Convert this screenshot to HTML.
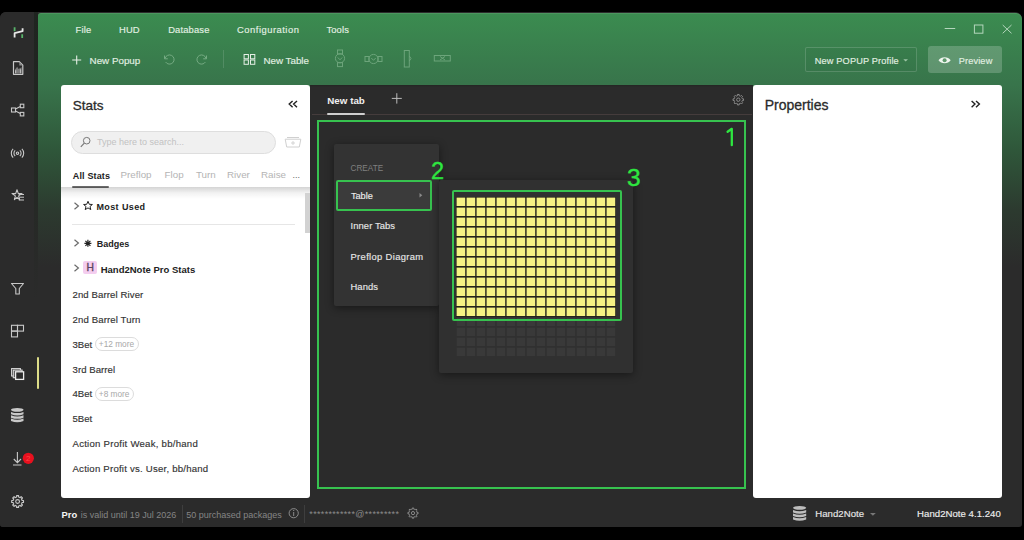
<!DOCTYPE html>
<html><head><meta charset="utf-8"><style>
html,body{margin:0;padding:0;background:#000;width:1024px;height:540px;overflow:hidden}
.t{position:absolute;font-family:"Liberation Sans", sans-serif;line-height:1;white-space:nowrap}
.r{position:absolute;display:block}
svg.r{overflow:visible}
</style></head><body>
<div class="r" style="left:0px;top:12px;width:1022px;height:515px;background:#2b2b2b;border-radius:6px 7px 3px 3px"></div>
<div class="r" style="left:38px;top:13px;width:984px;height:287px;background:linear-gradient(to bottom,#3b8c50 0px,#38744b 72px,#2f573a 137px,#2c3a2f 197px,#2b2b2b 254px);border-top-right-radius:6px;border-top-left-radius:3px;box-shadow:inset 0 1px 0 rgba(255,255,255,.09)"></div>
<div class="r" style="left:0px;top:12px;width:37px;height:515px;background:#2b2b2b;border-top-left-radius:6px;border-bottom-left-radius:3px"></div>
<div class="r" style="left:34px;top:12px;width:4px;height:288px;background:linear-gradient(to bottom,#1f2420 0px,#232823 150px,rgba(43,43,43,0) 288px)"></div>
<div class="t" style="left:75.60px;top:24.74px;font-size:9.4px;color:#e2f0e2;font-weight:400;letter-spacing:0.15px;-webkit-text-stroke:0.15px #e2f0e2">File</div>
<div class="t" style="left:119.00px;top:24.74px;font-size:9.4px;color:#e2f0e2;font-weight:400;letter-spacing:0.15px;-webkit-text-stroke:0.15px #e2f0e2">HUD</div>
<div class="t" style="left:168.20px;top:24.74px;font-size:9.4px;color:#e2f0e2;font-weight:400;letter-spacing:0.15px;-webkit-text-stroke:0.15px #e2f0e2">Database</div>
<div class="t" style="left:237.10px;top:24.74px;font-size:9.4px;color:#e2f0e2;font-weight:400;letter-spacing:0.15px;-webkit-text-stroke:0.15px #e2f0e2;letter-spacing:0.5px">Configuration</div>
<div class="t" style="left:326.40px;top:24.74px;font-size:9.4px;color:#e2f0e2;font-weight:400;letter-spacing:0.15px;-webkit-text-stroke:0.15px #e2f0e2">Tools</div>
<svg class="r" style="left:70px;top:52px;" width="14" height="16" viewBox="70 52 14 16"><path d="M76.7 55.5V64.5M72.2 60H81.2" stroke="#e6efe6" stroke-width="1.1" fill="none"/></svg>
<div class="t" style="left:89.60px;top:55.80px;font-size:9.8px;color:#e2f0e2;font-weight:400;-webkit-text-stroke:0.15px #e2f0e2">New Popup</div>
<svg class="r" style="left:160px;top:50px;opacity:.7" width="20" height="18" viewBox="160 50 20 18"><path d="M164.5 55.5V58.8H167.8" stroke="#8fbf9a" stroke-width="1" fill="none"/><path d="M165 58.5A4.6 4.6 0 1 1 165.6 62" stroke="#8fbf9a" stroke-width="1" fill="none"/></svg>
<svg class="r" style="left:194px;top:50px;opacity:.7" width="18" height="18" viewBox="194 50 18 18"><path d="M206.5 55.5V58.8H203.2" stroke="#8fbf9a" stroke-width="1" fill="none"/><path d="M206 58.5A4.6 4.6 0 1 0 205.4 62" stroke="#8fbf9a" stroke-width="1" fill="none"/></svg>
<div class="r" style="left:223px;top:50px;width:1px;height:18px;background:rgba(255,255,255,.13)"></div>
<svg class="r" style="left:240px;top:50px;" width="20" height="18" viewBox="240 50 20 18"><g stroke="#e6efe6" stroke-width="1" fill="none"><rect x="244.1" y="54.5" width="4.3" height="4.3"/><rect x="250.5" y="54.5" width="4.3" height="4.3"/><rect x="244.1" y="60" width="4.3" height="4.3"/><rect x="250.5" y="60" width="4.3" height="4.3"/></g></svg>
<div class="t" style="left:263.40px;top:55.80px;font-size:9.8px;color:#e2f0e2;font-weight:400;-webkit-text-stroke:0.15px #e2f0e2">New Table</div>
<svg class="r" style="left:330px;top:46px;" width="130" height="24" viewBox="330 46 130 24"><g stroke="#8fbf9a" stroke-width="1" fill="none" opacity=".6">
<rect x="337.5" y="50" width="5" height="4"/><circle cx="340" cy="58.3" r="4.6"/><rect x="337.5" y="62.6" width="5" height="4"/><path d="M337.8 57.5L340 59.8L342.2 57.5"/>
<rect x="365" y="56.5" width="4" height="5"/><circle cx="373.5" cy="59" r="4.6"/><rect x="378" y="56.5" width="4" height="5"/><path d="M371.3 58L373.5 60.3L375.7 58"/>
<rect x="404.3" y="50.5" width="5" height="16.5"/><path d="M409.3 56L411 58.5L409.3 61"/>
<rect x="434.3" y="55.5" width="16" height="5.5"/><path d="M440 56.5L445 60M445 56.5L440 60"/>
</g></svg>
<svg class="r" style="left:940px;top:20px;" width="80" height="18" viewBox="940 20 80 18"><g stroke="#b4d6bc" stroke-width="1" fill="none"><path d="M944.7 28.5H955.2"/><rect x="974.4" y="25" width="8.5" height="8.2"/><path d="M1002.7 25L1011.5 33.3M1011.5 25L1002.7 33.3"/></g></svg>
<div class="r" style="left:805px;top:47px;width:112px;height:25px;border:1px solid rgba(255,255,255,.16);box-sizing:border-box;background:rgba(0,0,0,.02);border-radius:2px"></div>
<div class="t" style="left:814.80px;top:56.81px;font-size:9.2px;color:#e2f0e2;font-weight:400;letter-spacing:0.15px;-webkit-text-stroke:0.15px #e2f0e2">New POPUP Profile</div>
<svg class="r" style="left:900px;top:56px;" width="12" height="8" viewBox="900 56 12 8"><path d="M903.3 59.3H908L905.65 61.6Z" fill="#9dc5a5"/></svg>
<div class="r" style="left:928px;top:46px;width:74px;height:27px;background:rgba(255,255,255,.2);border-radius:3px"></div>
<svg class="r" style="left:936px;top:54px;" width="17" height="12" viewBox="936 54 17 12"><path d="M938.5 60.2C941 56.2 948.2 56.2 950.7 60.2C948.2 64.2 941 64.2 938.5 60.2Z" fill="#eef5ee"/><circle cx="944.6" cy="60.2" r="2" fill="#5f9a6d"/></svg>
<div class="t" style="left:958.70px;top:56.81px;font-size:9.2px;color:#e2f0e2;font-weight:400;letter-spacing:0.15px;-webkit-text-stroke:0.15px #e2f0e2">Preview</div>
<svg class="r" style="left:8px;top:24px;" width="20" height="18" viewBox="8 24 20 18"><path d="M14.6 37.6V33.2L22.6 31.2V28.2" stroke="#e8e8e8" stroke-width="1.8" fill="none" stroke-linejoin="round"/><path d="M14.6 27.2V31.3M22.2 34.3V38" stroke="#58b36a" stroke-width="1.8" fill="none"/></svg>
<svg class="r" style="left:8px;top:58px;" width="20" height="20" viewBox="8 58 20 20"><path d="M13.5 61.6H19.3L22.8 65.2V74.3H13.5Z" stroke="#c8c8c8" stroke-width="1.2" fill="none" stroke-linejoin="round"/><path d="M19.3 62V65.4H22.6Z" fill="#8a8a8a"/><path d="M15 73.5V69.5L17.2 66.8L18.6 69L21.6 67.2V73.5Z" fill="#7c7c7c"/><path d="M15.6 73.3V70.2M20.6 73.3V69.3" stroke="#bdbdbd" stroke-width="1.1"/></svg>
<svg class="r" style="left:8px;top:100px;" width="20" height="20" viewBox="8 100 20 20"><g stroke="#c8c8c8" stroke-width="1.1" fill="none"><rect x="11.5" y="108" width="4" height="4"/><rect x="20.3" y="104.2" width="3.5" height="3.5"/><rect x="20.3" y="112.4" width="3.5" height="3.5"/><path d="M15.5 109L20.3 106.5M15.5 111L20.3 113.5"/></g></svg>
<svg class="r" style="left:8px;top:144px;" width="20" height="18" viewBox="8 144 20 18"><g stroke="#c8c8c8" stroke-width="1.1" fill="none"><circle cx="17.5" cy="153.2" r="1.2"/><path d="M19.81 150.44A3.6 3.6 0 0 1 19.81 155.96M15.19 155.96A3.6 3.6 0 0 1 15.19 150.44M21.88 148.82A6.2 6.2 0 0 1 21.88 157.58M13.12 157.58A6.2 6.2 0 0 1 13.12 148.82"/></g></svg>
<svg class="r" style="left:8px;top:186px;" width="20" height="18" viewBox="8 186 20 18"><g stroke="#c8c8c8" stroke-width="1.1" fill="none" stroke-linejoin="round"><path d="M17 189.7L18.3 193.6H22L18.6 195.9L19.6 199.6L17 197.4L14.4 199.6L15.4 195.9L12 193.6H15.7Z" /></g><path d="M18.8 194.5H24M19.3 197.2H24M18.8 200H24" stroke="#c8c8c8" stroke-width="1" /></svg>
<svg class="r" style="left:8px;top:278px;" width="20" height="20" viewBox="8 278 20 20"><path d="M11.5 283.5H23.5L19.3 288.5V294H15.8V288.5Z" stroke="#c8c8c8" stroke-width="1.1" fill="none" stroke-linejoin="round"/></svg>
<svg class="r" style="left:8px;top:320px;" width="20" height="20" viewBox="8 320 20 20"><g stroke="#c8c8c8" stroke-width="1.1" fill="none"><rect x="11.5" y="325.3" width="6" height="5.8"/><rect x="17.5" y="325.3" width="6" height="5.8"/><rect x="11.5" y="331.1" width="6" height="5.8"/></g></svg>
<svg class="r" style="left:8px;top:362px;" width="20" height="22" viewBox="8 362 20 22"><rect x="11.6" y="368.6" width="8.8" height="7.4" fill="#2b2b2b" stroke="#d8d8d8" stroke-width="1.1"/><rect x="13.3" y="370.1" width="8.8" height="7.6" fill="#555" stroke="#d8d8d8" stroke-width="1.1"/><rect x="15.6" y="371.8" width="8" height="7.6" fill="#2b2b2b" stroke="#ececec" stroke-width="1.3"/></svg>
<div class="r" style="left:36.8px;top:357.3px;width:2.0px;height:31.899999999999977px;background:#dcdc88;border-radius:1px"></div>
<svg class="r" style="left:8px;top:404px;" width="19" height="20" viewBox="8 404 19 20"><g fill="#c8c8c8"><ellipse cx="17.25" cy="409.79999999999995" rx="6.25" ry="1.9"/><path d="M11 411.90Q17.25 414.30 23.5 411.90V414.30Q17.25 416.70 11 414.30Z"/><path d="M11 415.25Q17.25 417.65 23.5 415.25V417.65Q17.25 420.05 11 417.65Z"/><path d="M11 418.60Q17.25 421.00 23.5 418.60V421.00Q17.25 423.40 11 421.00Z"/></g></svg>
<svg class="r" style="left:8px;top:448px;" width="32" height="22" viewBox="8 448 32 22"><path d="M17.4 452V462.5M13.8 459L17.4 462.6L21 459M13 465H21.5" stroke="#c8c8c8" stroke-width="1.1" fill="none"/><circle cx="28.3" cy="458.3" r="5.6" fill="#e8101e"/><text x="28.3" y="461.3" font-size="8" text-anchor="middle" fill="#ff4545" font-family="Liberation Sans">2</text></svg>
<svg class="r" style="left:8px;top:492px;" width="19" height="19" viewBox="8 492 19 19"><path d="M15.92 497.22L16.66 497.00L16.61 495.58L18.59 495.58L18.54 497.00L19.28 497.22L19.44 497.29L20.12 497.65L21.09 496.62L22.48 498.01L21.45 498.98L21.81 499.66L21.88 499.82L22.10 500.56L23.52 500.51L23.52 502.49L22.10 502.44L21.88 503.18L21.81 503.34L21.45 504.02L22.48 504.99L21.09 506.38L20.12 505.35L19.44 505.71L19.28 505.78L18.54 506.00L18.59 507.42L16.61 507.42L16.66 506.00L15.92 505.78L15.76 505.71L15.08 505.35L14.11 506.38L12.72 504.99L13.75 504.02L13.39 503.34L13.32 503.18L13.10 502.44L11.68 502.49L11.68 500.51L13.10 500.56L13.32 499.82L13.39 499.66L13.75 498.98L12.72 498.01L14.11 496.62L15.08 497.65L15.76 497.29Z" stroke="#c8c8c8" stroke-width="1.1" fill="none" stroke-linejoin="round"/><circle cx="17.6" cy="501.5" r="1.9" stroke="#c8c8c8" stroke-width="1.1" fill="none"/></svg>
<div class="r" style="left:61px;top:85px;width:249px;height:413px;background:#fff;border-radius:3px"></div>
<div class="t" style="left:72.80px;top:98.77px;font-size:13.5px;color:#2a2a2a;font-weight:400;-webkit-text-stroke:0.3px #2a2a2a">Stats</div>
<svg class="r" style="left:285px;top:98px;" width="17" height="12" viewBox="285 98 17 12"><path d="M292.6 100.9L289.2 104.1L292.6 107.3M297 100.9L293.6 104.1L297 107.3" stroke="#222" stroke-width="1.4" fill="none"/></svg>
<div class="r" style="left:70.5px;top:130.5px;width:205.5px;height:23.0px;background:#f0f0f0;border:1px solid #dedede;box-sizing:border-box;border-radius:12px"></div>
<svg class="r" style="left:78px;top:134px;" width="16" height="16" viewBox="78 134 16 16"><circle cx="86.7" cy="140.7" r="3.3" stroke="#777" stroke-width="1" fill="none"/><path d="M84.3 143.2L80.8 146.8" stroke="#777" stroke-width="1.2"/></svg>
<div class="t" style="left:96.90px;top:137.88px;font-size:9px;color:#c2c2c2;font-weight:400;">Type here to search...</div>
<svg class="r" style="left:282px;top:134px;" width="22" height="16" viewBox="282 134 22 16"><path d="M285.2 139.2H300.8L299.3 147H286.7Z" stroke="#d0d0d0" stroke-width="1" fill="none"/><path d="M287 137.5H299" stroke="#d0d0d0" stroke-width="1"/><path d="M291 143H295M293 141V145" stroke="#d0d0d0" stroke-width=".9"/></svg>
<div class="t" style="left:72.80px;top:171.58px;font-size:9px;color:#222;font-weight:700;letter-spacing:0.15px">All Stats</div>
<div class="r" style="left:72px;top:186.2px;width:37px;height:1.8000000000000114px;background:#6a6a6a;border-radius:1px"></div>
<div class="t" style="left:120.50px;top:170.10px;font-size:9.8px;color:#b4b4b4;font-weight:400;">Preflop</div>
<div class="t" style="left:164.60px;top:170.10px;font-size:9.8px;color:#b4b4b4;font-weight:400;">Flop</div>
<div class="t" style="left:195.90px;top:170.10px;font-size:9.8px;color:#b4b4b4;font-weight:400;">Turn</div>
<div class="t" style="left:227.00px;top:170.10px;font-size:9.8px;color:#b4b4b4;font-weight:400;">River</div>
<div class="t" style="left:261.00px;top:170.10px;font-size:9.8px;color:#b4b4b4;font-weight:400;">Raise</div>
<div class="t" style="left:292.50px;top:171.38px;font-size:9px;color:#666;font-weight:400;">...</div>
<div class="r" style="left:61px;top:187px;width:249px;height:12px;background:linear-gradient(to bottom,rgba(0,0,0,.17),rgba(0,0,0,.05) 50%,rgba(0,0,0,0))"></div>
<div class="r" style="left:304.6px;top:193px;width:5.399999999999977px;height:39.5px;background:#d2d2d2"></div>
<svg class="r" style="left:72px;top:200px;" width="10" height="12" viewBox="72 200 10 12"><path d="M74.5 202.7L78.4 206L74.5 209.3" stroke="#6a6a6a" stroke-width="1.2" fill="none"/></svg>
<svg class="r" style="left:82px;top:199px;" width="12" height="13" viewBox="82 199 12 13"><path d="M88 201.3L89.3 204.3L92.4 204.5L90 206.5L90.8 209.6L88 207.9L85.2 209.6L86 206.5L83.6 204.5L86.7 204.3Z" stroke="#222" stroke-width="1" fill="none" stroke-linejoin="round"/></svg>
<div class="t" style="left:96.40px;top:202.98px;font-size:9px;color:#222;font-weight:700;letter-spacing:0.4px">Most Used</div>
<div class="r" style="left:72px;top:224px;width:223px;height:1px;background:#e6e6e6"></div>
<svg class="r" style="left:72px;top:237.4px;" width="10" height="12.0" viewBox="72 237.4 10 12.0"><path d="M74.5 240.1L78.4 243.4L74.5 246.70000000000002" stroke="#6a6a6a" stroke-width="1.2" fill="none"/></svg>
<svg class="r" style="left:82px;top:238px;" width="12" height="12" viewBox="82 238 12 12"><path d="M87.9 239.8V246.8M84.4 243.3H91.4M85.4 240.8L90.4 245.8M90.4 240.8L85.4 245.8" stroke="#222" stroke-width="1.2"/></svg>
<div class="t" style="left:96.70px;top:239.58px;font-size:9px;color:#222;font-weight:700;">Badges</div>
<svg class="r" style="left:72px;top:262px;" width="10" height="12" viewBox="72 262 10 12"><path d="M74.5 264.7L78.4 268L74.5 271.3" stroke="#6a6a6a" stroke-width="1.2" fill="none"/></svg>
<div class="r" style="left:83px;top:260.5px;width:14px;height:13.800000000000011px;background:#f4cdef;border-radius:2px"></div>
<div class="t" style="left:86.40px;top:262.98px;font-size:10.3px;color:#5a4662;font-weight:400;-webkit-text-stroke:0.35px #5a4662">H</div>
<div class="t" style="left:100.70px;top:264.96px;font-size:9.5px;color:#222;font-weight:700;">Hand2Note Pro Stats</div>
<div class="t" style="left:72.50px;top:290.07px;font-size:9.6px;color:#333;font-weight:400;-webkit-text-stroke:0.15px #333;letter-spacing:0.1px">2nd Barrel River</div>
<div class="t" style="left:72.50px;top:314.92px;font-size:9.6px;color:#333;font-weight:400;-webkit-text-stroke:0.15px #333;letter-spacing:0.12px">2nd Barrel Turn</div>
<div class="t" style="left:72.50px;top:339.77px;font-size:9.6px;color:#333;font-weight:400;-webkit-text-stroke:0.15px #333;letter-spacing:0.0px">3Bet</div>
<div class="t" style="left:72.50px;top:364.62px;font-size:9.6px;color:#333;font-weight:400;-webkit-text-stroke:0.15px #333;letter-spacing:0.05px">3rd Barrel</div>
<div class="t" style="left:72.50px;top:389.47px;font-size:9.6px;color:#333;font-weight:400;-webkit-text-stroke:0.15px #333;letter-spacing:0.0px">4Bet</div>
<div class="t" style="left:72.50px;top:414.32px;font-size:9.6px;color:#333;font-weight:400;-webkit-text-stroke:0.15px #333;letter-spacing:0.0px">5Bet</div>
<div class="t" style="left:72.50px;top:439.17px;font-size:9.6px;color:#333;font-weight:400;-webkit-text-stroke:0.15px #333;letter-spacing:0.25px">Action Profit Weak, bb/hand</div>
<div class="t" style="left:72.50px;top:464.02px;font-size:9.6px;color:#333;font-weight:400;-webkit-text-stroke:0.15px #333;letter-spacing:0.22px">Action Profit vs. User, bb/hand</div>
<div class="r" style="left:94.8px;top:336.5px;width:44.7px;height:14.0px;border:1px solid #dcdcdc;box-sizing:border-box;border-radius:8px"></div>
<div class="t" style="left:98.80px;top:339.77px;font-size:8.3px;color:#a8a8a8;font-weight:400;">+12 more</div>
<div class="r" style="left:94.8px;top:386.5px;width:39.7px;height:14.0px;border:1px solid #dcdcdc;box-sizing:border-box;border-radius:8px"></div>
<div class="t" style="left:98.80px;top:389.77px;font-size:8.3px;color:#a8a8a8;font-weight:400;">+8 more</div>
<div class="r" style="left:310px;top:85px;width:442.5px;height:413px;background:linear-gradient(to bottom,#232623 0px,#2b2b2b 2px)"></div>
<div class="t" style="left:327.30px;top:95.90px;font-size:9.8px;color:#f0f0f0;font-weight:700;">New tab</div>
<div class="r" style="left:312px;top:114px;width:440px;height:1px;background:#453c3c"></div>
<div class="r" style="left:327px;top:113px;width:38px;height:2px;background:#cfcfcf;border-radius:1px"></div>
<svg class="r" style="left:388px;top:90px;" width="18" height="16" viewBox="388 90 18 16"><path d="M396.8 93.2V103.6M391.8 98.4H401.8" stroke="#bbb" stroke-width="1" fill="none"/></svg>
<svg class="r" style="left:730px;top:91px;" width="17" height="18" viewBox="730 91 17 18"><path d="M736.81 95.88L737.46 95.69L737.43 94.47L739.17 94.47L739.14 95.69L739.79 95.88L739.94 95.94L740.54 96.27L741.38 95.39L742.61 96.62L741.73 97.46L742.06 98.06L742.12 98.21L742.31 98.86L743.53 98.83L743.53 100.57L742.31 100.54L742.12 101.19L742.06 101.34L741.73 101.94L742.61 102.78L741.38 104.01L740.54 103.13L739.94 103.46L739.79 103.52L739.14 103.71L739.17 104.93L737.43 104.93L737.46 103.71L736.81 103.52L736.66 103.46L736.06 103.13L735.22 104.01L733.99 102.78L734.87 101.94L734.54 101.34L734.48 101.19L734.29 100.54L733.07 100.57L733.07 98.83L734.29 98.86L734.48 98.21L734.54 98.06L734.87 97.46L733.99 96.62L735.22 95.39L736.06 96.27L736.66 95.94Z" stroke="#8a8a8a" stroke-width="1.0" fill="none" stroke-linejoin="round"/><circle cx="738.3" cy="99.7" r="1.7" stroke="#8a8a8a" stroke-width="1.0" fill="none"/></svg>
<div class="r" style="left:317px;top:120px;width:429px;height:369px;border:2px solid #37c24f;box-sizing:border-box"></div>
<svg class="r" style="left:722px;top:124px;" width="18" height="26" viewBox="722 124 18 26"><path d="M731.8 145.2V128.8L727.6 131.8" stroke="#2ee640" stroke-width="2.3" fill="none" stroke-linecap="round" stroke-linejoin="round"/></svg>
<div class="r" style="left:334px;top:144px;width:105px;height:162px;background:#333333;box-shadow:0 2px 8px rgba(0,0,0,.45);border-radius:2px"></div>
<div class="t" style="left:350.50px;top:165.36px;font-size:8.2px;color:#808080;font-weight:400;">CREATE</div>
<div class="r" style="left:336px;top:180px;width:96px;height:31px;background:#3b3b3b;border:2px solid #37c24f;box-sizing:border-box;border-radius:2px"></div>
<div class="t" style="left:350.90px;top:191.51px;font-size:9.2px;color:#ececec;font-weight:400;-webkit-text-stroke:0.15px #ececec">Table</div>
<svg class="r" style="left:416px;top:190px;" width="10" height="10" viewBox="416 190 10 10"><path d="M419.5 193L422.3 195.3L419.5 197.6Z" fill="#8a8a8a"/></svg>
<div class="t" style="left:350.50px;top:221.44px;font-size:9.4px;color:#e6e6e6;font-weight:400;-webkit-text-stroke:0.15px #e6e6e6;letter-spacing:0.1px">Inner Tabs</div>
<div class="t" style="left:350.50px;top:251.84px;font-size:9.4px;color:#e6e6e6;font-weight:400;-webkit-text-stroke:0.15px #e6e6e6;letter-spacing:0.35px">Preflop Diagram</div>
<div class="t" style="left:350.50px;top:281.54px;font-size:9.4px;color:#e6e6e6;font-weight:400;-webkit-text-stroke:0.15px #e6e6e6;letter-spacing:0.1px">Hands</div>
<div class="t" style="left:430.90px;top:160.31px;font-size:23.5px;color:#2ee640;font-weight:400;-webkit-text-stroke:0.4px #2ee640">2</div>
<div class="r" style="left:439px;top:179.5px;width:194px;height:193.5px;background:#303030;box-shadow:0 2px 8px rgba(0,0,0,.45);border-radius:2px"></div>
<div class="r" style="left:455.8px;top:196.8px;width:160.2px;height:120.19999999999999px;background:#24241c"></div>
<svg class="r" style="left:450px;top:190px;" width="174" height="170" viewBox="450 190 174 170"><rect x="456.6" y="197.6" width="8.6" height="8.4" fill="#f6f283"/><rect x="466.6" y="197.6" width="8.6" height="8.4" fill="#f6f283"/><rect x="476.6" y="197.6" width="8.6" height="8.4" fill="#f6f283"/><rect x="486.6" y="197.6" width="8.6" height="8.4" fill="#f6f283"/><rect x="496.6" y="197.6" width="8.6" height="8.4" fill="#f6f283"/><rect x="506.6" y="197.6" width="8.6" height="8.4" fill="#f6f283"/><rect x="516.6" y="197.6" width="8.6" height="8.4" fill="#f6f283"/><rect x="526.6" y="197.6" width="8.6" height="8.4" fill="#f6f283"/><rect x="536.6" y="197.6" width="8.6" height="8.4" fill="#f6f283"/><rect x="546.6" y="197.6" width="8.6" height="8.4" fill="#f6f283"/><rect x="556.6" y="197.6" width="8.6" height="8.4" fill="#f6f283"/><rect x="566.6" y="197.6" width="8.6" height="8.4" fill="#f6f283"/><rect x="576.6" y="197.6" width="8.6" height="8.4" fill="#f6f283"/><rect x="586.6" y="197.6" width="8.6" height="8.4" fill="#f6f283"/><rect x="596.6" y="197.6" width="8.6" height="8.4" fill="#f6f283"/><rect x="606.6" y="197.6" width="8.6" height="8.4" fill="#f6f283"/><rect x="456.6" y="207.6" width="8.6" height="8.4" fill="#f6f283"/><rect x="466.6" y="207.6" width="8.6" height="8.4" fill="#f6f283"/><rect x="476.6" y="207.6" width="8.6" height="8.4" fill="#f6f283"/><rect x="486.6" y="207.6" width="8.6" height="8.4" fill="#f6f283"/><rect x="496.6" y="207.6" width="8.6" height="8.4" fill="#f6f283"/><rect x="506.6" y="207.6" width="8.6" height="8.4" fill="#f6f283"/><rect x="516.6" y="207.6" width="8.6" height="8.4" fill="#f6f283"/><rect x="526.6" y="207.6" width="8.6" height="8.4" fill="#f6f283"/><rect x="536.6" y="207.6" width="8.6" height="8.4" fill="#f6f283"/><rect x="546.6" y="207.6" width="8.6" height="8.4" fill="#f6f283"/><rect x="556.6" y="207.6" width="8.6" height="8.4" fill="#f6f283"/><rect x="566.6" y="207.6" width="8.6" height="8.4" fill="#f6f283"/><rect x="576.6" y="207.6" width="8.6" height="8.4" fill="#f6f283"/><rect x="586.6" y="207.6" width="8.6" height="8.4" fill="#f6f283"/><rect x="596.6" y="207.6" width="8.6" height="8.4" fill="#f6f283"/><rect x="606.6" y="207.6" width="8.6" height="8.4" fill="#f6f283"/><rect x="456.6" y="217.6" width="8.6" height="8.4" fill="#f6f283"/><rect x="466.6" y="217.6" width="8.6" height="8.4" fill="#f6f283"/><rect x="476.6" y="217.6" width="8.6" height="8.4" fill="#f6f283"/><rect x="486.6" y="217.6" width="8.6" height="8.4" fill="#f6f283"/><rect x="496.6" y="217.6" width="8.6" height="8.4" fill="#f6f283"/><rect x="506.6" y="217.6" width="8.6" height="8.4" fill="#f6f283"/><rect x="516.6" y="217.6" width="8.6" height="8.4" fill="#f6f283"/><rect x="526.6" y="217.6" width="8.6" height="8.4" fill="#f6f283"/><rect x="536.6" y="217.6" width="8.6" height="8.4" fill="#f6f283"/><rect x="546.6" y="217.6" width="8.6" height="8.4" fill="#f6f283"/><rect x="556.6" y="217.6" width="8.6" height="8.4" fill="#f6f283"/><rect x="566.6" y="217.6" width="8.6" height="8.4" fill="#f6f283"/><rect x="576.6" y="217.6" width="8.6" height="8.4" fill="#f6f283"/><rect x="586.6" y="217.6" width="8.6" height="8.4" fill="#f6f283"/><rect x="596.6" y="217.6" width="8.6" height="8.4" fill="#f6f283"/><rect x="606.6" y="217.6" width="8.6" height="8.4" fill="#f6f283"/><rect x="456.6" y="227.6" width="8.6" height="8.4" fill="#f6f283"/><rect x="466.6" y="227.6" width="8.6" height="8.4" fill="#f6f283"/><rect x="476.6" y="227.6" width="8.6" height="8.4" fill="#f6f283"/><rect x="486.6" y="227.6" width="8.6" height="8.4" fill="#f6f283"/><rect x="496.6" y="227.6" width="8.6" height="8.4" fill="#f6f283"/><rect x="506.6" y="227.6" width="8.6" height="8.4" fill="#f6f283"/><rect x="516.6" y="227.6" width="8.6" height="8.4" fill="#f6f283"/><rect x="526.6" y="227.6" width="8.6" height="8.4" fill="#f6f283"/><rect x="536.6" y="227.6" width="8.6" height="8.4" fill="#f6f283"/><rect x="546.6" y="227.6" width="8.6" height="8.4" fill="#f6f283"/><rect x="556.6" y="227.6" width="8.6" height="8.4" fill="#f6f283"/><rect x="566.6" y="227.6" width="8.6" height="8.4" fill="#f6f283"/><rect x="576.6" y="227.6" width="8.6" height="8.4" fill="#f6f283"/><rect x="586.6" y="227.6" width="8.6" height="8.4" fill="#f6f283"/><rect x="596.6" y="227.6" width="8.6" height="8.4" fill="#f6f283"/><rect x="606.6" y="227.6" width="8.6" height="8.4" fill="#f6f283"/><rect x="456.6" y="237.6" width="8.6" height="8.4" fill="#f6f283"/><rect x="466.6" y="237.6" width="8.6" height="8.4" fill="#f6f283"/><rect x="476.6" y="237.6" width="8.6" height="8.4" fill="#f6f283"/><rect x="486.6" y="237.6" width="8.6" height="8.4" fill="#f6f283"/><rect x="496.6" y="237.6" width="8.6" height="8.4" fill="#f6f283"/><rect x="506.6" y="237.6" width="8.6" height="8.4" fill="#f6f283"/><rect x="516.6" y="237.6" width="8.6" height="8.4" fill="#f6f283"/><rect x="526.6" y="237.6" width="8.6" height="8.4" fill="#f6f283"/><rect x="536.6" y="237.6" width="8.6" height="8.4" fill="#f6f283"/><rect x="546.6" y="237.6" width="8.6" height="8.4" fill="#f6f283"/><rect x="556.6" y="237.6" width="8.6" height="8.4" fill="#f6f283"/><rect x="566.6" y="237.6" width="8.6" height="8.4" fill="#f6f283"/><rect x="576.6" y="237.6" width="8.6" height="8.4" fill="#f6f283"/><rect x="586.6" y="237.6" width="8.6" height="8.4" fill="#f6f283"/><rect x="596.6" y="237.6" width="8.6" height="8.4" fill="#f6f283"/><rect x="606.6" y="237.6" width="8.6" height="8.4" fill="#f6f283"/><rect x="456.6" y="247.6" width="8.6" height="8.4" fill="#f6f283"/><rect x="466.6" y="247.6" width="8.6" height="8.4" fill="#f6f283"/><rect x="476.6" y="247.6" width="8.6" height="8.4" fill="#f6f283"/><rect x="486.6" y="247.6" width="8.6" height="8.4" fill="#f6f283"/><rect x="496.6" y="247.6" width="8.6" height="8.4" fill="#f6f283"/><rect x="506.6" y="247.6" width="8.6" height="8.4" fill="#f6f283"/><rect x="516.6" y="247.6" width="8.6" height="8.4" fill="#f6f283"/><rect x="526.6" y="247.6" width="8.6" height="8.4" fill="#f6f283"/><rect x="536.6" y="247.6" width="8.6" height="8.4" fill="#f6f283"/><rect x="546.6" y="247.6" width="8.6" height="8.4" fill="#f6f283"/><rect x="556.6" y="247.6" width="8.6" height="8.4" fill="#f6f283"/><rect x="566.6" y="247.6" width="8.6" height="8.4" fill="#f6f283"/><rect x="576.6" y="247.6" width="8.6" height="8.4" fill="#f6f283"/><rect x="586.6" y="247.6" width="8.6" height="8.4" fill="#f6f283"/><rect x="596.6" y="247.6" width="8.6" height="8.4" fill="#f6f283"/><rect x="606.6" y="247.6" width="8.6" height="8.4" fill="#f6f283"/><rect x="456.6" y="257.6" width="8.6" height="8.4" fill="#f6f283"/><rect x="466.6" y="257.6" width="8.6" height="8.4" fill="#f6f283"/><rect x="476.6" y="257.6" width="8.6" height="8.4" fill="#f6f283"/><rect x="486.6" y="257.6" width="8.6" height="8.4" fill="#f6f283"/><rect x="496.6" y="257.6" width="8.6" height="8.4" fill="#f6f283"/><rect x="506.6" y="257.6" width="8.6" height="8.4" fill="#f6f283"/><rect x="516.6" y="257.6" width="8.6" height="8.4" fill="#f6f283"/><rect x="526.6" y="257.6" width="8.6" height="8.4" fill="#f6f283"/><rect x="536.6" y="257.6" width="8.6" height="8.4" fill="#f6f283"/><rect x="546.6" y="257.6" width="8.6" height="8.4" fill="#f6f283"/><rect x="556.6" y="257.6" width="8.6" height="8.4" fill="#f6f283"/><rect x="566.6" y="257.6" width="8.6" height="8.4" fill="#f6f283"/><rect x="576.6" y="257.6" width="8.6" height="8.4" fill="#f6f283"/><rect x="586.6" y="257.6" width="8.6" height="8.4" fill="#f6f283"/><rect x="596.6" y="257.6" width="8.6" height="8.4" fill="#f6f283"/><rect x="606.6" y="257.6" width="8.6" height="8.4" fill="#f6f283"/><rect x="456.6" y="267.6" width="8.6" height="8.4" fill="#f6f283"/><rect x="466.6" y="267.6" width="8.6" height="8.4" fill="#f6f283"/><rect x="476.6" y="267.6" width="8.6" height="8.4" fill="#f6f283"/><rect x="486.6" y="267.6" width="8.6" height="8.4" fill="#f6f283"/><rect x="496.6" y="267.6" width="8.6" height="8.4" fill="#f6f283"/><rect x="506.6" y="267.6" width="8.6" height="8.4" fill="#f6f283"/><rect x="516.6" y="267.6" width="8.6" height="8.4" fill="#f6f283"/><rect x="526.6" y="267.6" width="8.6" height="8.4" fill="#f6f283"/><rect x="536.6" y="267.6" width="8.6" height="8.4" fill="#f6f283"/><rect x="546.6" y="267.6" width="8.6" height="8.4" fill="#f6f283"/><rect x="556.6" y="267.6" width="8.6" height="8.4" fill="#f6f283"/><rect x="566.6" y="267.6" width="8.6" height="8.4" fill="#f6f283"/><rect x="576.6" y="267.6" width="8.6" height="8.4" fill="#f6f283"/><rect x="586.6" y="267.6" width="8.6" height="8.4" fill="#f6f283"/><rect x="596.6" y="267.6" width="8.6" height="8.4" fill="#f6f283"/><rect x="606.6" y="267.6" width="8.6" height="8.4" fill="#f6f283"/><rect x="456.6" y="277.6" width="8.6" height="8.4" fill="#f6f283"/><rect x="466.6" y="277.6" width="8.6" height="8.4" fill="#f6f283"/><rect x="476.6" y="277.6" width="8.6" height="8.4" fill="#f6f283"/><rect x="486.6" y="277.6" width="8.6" height="8.4" fill="#f6f283"/><rect x="496.6" y="277.6" width="8.6" height="8.4" fill="#f6f283"/><rect x="506.6" y="277.6" width="8.6" height="8.4" fill="#f6f283"/><rect x="516.6" y="277.6" width="8.6" height="8.4" fill="#f6f283"/><rect x="526.6" y="277.6" width="8.6" height="8.4" fill="#f6f283"/><rect x="536.6" y="277.6" width="8.6" height="8.4" fill="#f6f283"/><rect x="546.6" y="277.6" width="8.6" height="8.4" fill="#f6f283"/><rect x="556.6" y="277.6" width="8.6" height="8.4" fill="#f6f283"/><rect x="566.6" y="277.6" width="8.6" height="8.4" fill="#f6f283"/><rect x="576.6" y="277.6" width="8.6" height="8.4" fill="#f6f283"/><rect x="586.6" y="277.6" width="8.6" height="8.4" fill="#f6f283"/><rect x="596.6" y="277.6" width="8.6" height="8.4" fill="#f6f283"/><rect x="606.6" y="277.6" width="8.6" height="8.4" fill="#f6f283"/><rect x="456.6" y="287.6" width="8.6" height="8.4" fill="#f6f283"/><rect x="466.6" y="287.6" width="8.6" height="8.4" fill="#f6f283"/><rect x="476.6" y="287.6" width="8.6" height="8.4" fill="#f6f283"/><rect x="486.6" y="287.6" width="8.6" height="8.4" fill="#f6f283"/><rect x="496.6" y="287.6" width="8.6" height="8.4" fill="#f6f283"/><rect x="506.6" y="287.6" width="8.6" height="8.4" fill="#f6f283"/><rect x="516.6" y="287.6" width="8.6" height="8.4" fill="#f6f283"/><rect x="526.6" y="287.6" width="8.6" height="8.4" fill="#f6f283"/><rect x="536.6" y="287.6" width="8.6" height="8.4" fill="#f6f283"/><rect x="546.6" y="287.6" width="8.6" height="8.4" fill="#f6f283"/><rect x="556.6" y="287.6" width="8.6" height="8.4" fill="#f6f283"/><rect x="566.6" y="287.6" width="8.6" height="8.4" fill="#f6f283"/><rect x="576.6" y="287.6" width="8.6" height="8.4" fill="#f6f283"/><rect x="586.6" y="287.6" width="8.6" height="8.4" fill="#f6f283"/><rect x="596.6" y="287.6" width="8.6" height="8.4" fill="#f6f283"/><rect x="606.6" y="287.6" width="8.6" height="8.4" fill="#f6f283"/><rect x="456.6" y="297.6" width="8.6" height="8.4" fill="#f6f283"/><rect x="466.6" y="297.6" width="8.6" height="8.4" fill="#f6f283"/><rect x="476.6" y="297.6" width="8.6" height="8.4" fill="#f6f283"/><rect x="486.6" y="297.6" width="8.6" height="8.4" fill="#f6f283"/><rect x="496.6" y="297.6" width="8.6" height="8.4" fill="#f6f283"/><rect x="506.6" y="297.6" width="8.6" height="8.4" fill="#f6f283"/><rect x="516.6" y="297.6" width="8.6" height="8.4" fill="#f6f283"/><rect x="526.6" y="297.6" width="8.6" height="8.4" fill="#f6f283"/><rect x="536.6" y="297.6" width="8.6" height="8.4" fill="#f6f283"/><rect x="546.6" y="297.6" width="8.6" height="8.4" fill="#f6f283"/><rect x="556.6" y="297.6" width="8.6" height="8.4" fill="#f6f283"/><rect x="566.6" y="297.6" width="8.6" height="8.4" fill="#f6f283"/><rect x="576.6" y="297.6" width="8.6" height="8.4" fill="#f6f283"/><rect x="586.6" y="297.6" width="8.6" height="8.4" fill="#f6f283"/><rect x="596.6" y="297.6" width="8.6" height="8.4" fill="#f6f283"/><rect x="606.6" y="297.6" width="8.6" height="8.4" fill="#f6f283"/><rect x="456.6" y="307.6" width="8.6" height="8.4" fill="#f6f283"/><rect x="466.6" y="307.6" width="8.6" height="8.4" fill="#f6f283"/><rect x="476.6" y="307.6" width="8.6" height="8.4" fill="#f6f283"/><rect x="486.6" y="307.6" width="8.6" height="8.4" fill="#f6f283"/><rect x="496.6" y="307.6" width="8.6" height="8.4" fill="#f6f283"/><rect x="506.6" y="307.6" width="8.6" height="8.4" fill="#f6f283"/><rect x="516.6" y="307.6" width="8.6" height="8.4" fill="#f6f283"/><rect x="526.6" y="307.6" width="8.6" height="8.4" fill="#f6f283"/><rect x="536.6" y="307.6" width="8.6" height="8.4" fill="#f6f283"/><rect x="546.6" y="307.6" width="8.6" height="8.4" fill="#f6f283"/><rect x="556.6" y="307.6" width="8.6" height="8.4" fill="#f6f283"/><rect x="566.6" y="307.6" width="8.6" height="8.4" fill="#f6f283"/><rect x="576.6" y="307.6" width="8.6" height="8.4" fill="#f6f283"/><rect x="586.6" y="307.6" width="8.6" height="8.4" fill="#f6f283"/><rect x="596.6" y="307.6" width="8.6" height="8.4" fill="#f6f283"/><rect x="606.6" y="307.6" width="8.6" height="8.4" fill="#f6f283"/><rect x="456.6" y="317.6" width="8.6" height="8.4" fill="#393939"/><rect x="466.6" y="317.6" width="8.6" height="8.4" fill="#393939"/><rect x="476.6" y="317.6" width="8.6" height="8.4" fill="#393939"/><rect x="486.6" y="317.6" width="8.6" height="8.4" fill="#393939"/><rect x="496.6" y="317.6" width="8.6" height="8.4" fill="#393939"/><rect x="506.6" y="317.6" width="8.6" height="8.4" fill="#393939"/><rect x="516.6" y="317.6" width="8.6" height="8.4" fill="#393939"/><rect x="526.6" y="317.6" width="8.6" height="8.4" fill="#393939"/><rect x="536.6" y="317.6" width="8.6" height="8.4" fill="#393939"/><rect x="546.6" y="317.6" width="8.6" height="8.4" fill="#393939"/><rect x="556.6" y="317.6" width="8.6" height="8.4" fill="#393939"/><rect x="566.6" y="317.6" width="8.6" height="8.4" fill="#393939"/><rect x="576.6" y="317.6" width="8.6" height="8.4" fill="#393939"/><rect x="586.6" y="317.6" width="8.6" height="8.4" fill="#393939"/><rect x="596.6" y="317.6" width="8.6" height="8.4" fill="#393939"/><rect x="606.6" y="317.6" width="8.6" height="8.4" fill="#393939"/><rect x="456.6" y="327.6" width="8.6" height="8.4" fill="#393939"/><rect x="466.6" y="327.6" width="8.6" height="8.4" fill="#393939"/><rect x="476.6" y="327.6" width="8.6" height="8.4" fill="#393939"/><rect x="486.6" y="327.6" width="8.6" height="8.4" fill="#393939"/><rect x="496.6" y="327.6" width="8.6" height="8.4" fill="#393939"/><rect x="506.6" y="327.6" width="8.6" height="8.4" fill="#393939"/><rect x="516.6" y="327.6" width="8.6" height="8.4" fill="#393939"/><rect x="526.6" y="327.6" width="8.6" height="8.4" fill="#393939"/><rect x="536.6" y="327.6" width="8.6" height="8.4" fill="#393939"/><rect x="546.6" y="327.6" width="8.6" height="8.4" fill="#393939"/><rect x="556.6" y="327.6" width="8.6" height="8.4" fill="#393939"/><rect x="566.6" y="327.6" width="8.6" height="8.4" fill="#393939"/><rect x="576.6" y="327.6" width="8.6" height="8.4" fill="#393939"/><rect x="586.6" y="327.6" width="8.6" height="8.4" fill="#393939"/><rect x="596.6" y="327.6" width="8.6" height="8.4" fill="#393939"/><rect x="606.6" y="327.6" width="8.6" height="8.4" fill="#393939"/><rect x="456.6" y="337.6" width="8.6" height="8.4" fill="#393939"/><rect x="466.6" y="337.6" width="8.6" height="8.4" fill="#393939"/><rect x="476.6" y="337.6" width="8.6" height="8.4" fill="#393939"/><rect x="486.6" y="337.6" width="8.6" height="8.4" fill="#393939"/><rect x="496.6" y="337.6" width="8.6" height="8.4" fill="#393939"/><rect x="506.6" y="337.6" width="8.6" height="8.4" fill="#393939"/><rect x="516.6" y="337.6" width="8.6" height="8.4" fill="#393939"/><rect x="526.6" y="337.6" width="8.6" height="8.4" fill="#393939"/><rect x="536.6" y="337.6" width="8.6" height="8.4" fill="#393939"/><rect x="546.6" y="337.6" width="8.6" height="8.4" fill="#393939"/><rect x="556.6" y="337.6" width="8.6" height="8.4" fill="#393939"/><rect x="566.6" y="337.6" width="8.6" height="8.4" fill="#393939"/><rect x="576.6" y="337.6" width="8.6" height="8.4" fill="#393939"/><rect x="586.6" y="337.6" width="8.6" height="8.4" fill="#393939"/><rect x="596.6" y="337.6" width="8.6" height="8.4" fill="#393939"/><rect x="606.6" y="337.6" width="8.6" height="8.4" fill="#393939"/><rect x="456.6" y="347.6" width="8.6" height="8.4" fill="#393939"/><rect x="466.6" y="347.6" width="8.6" height="8.4" fill="#393939"/><rect x="476.6" y="347.6" width="8.6" height="8.4" fill="#393939"/><rect x="486.6" y="347.6" width="8.6" height="8.4" fill="#393939"/><rect x="496.6" y="347.6" width="8.6" height="8.4" fill="#393939"/><rect x="506.6" y="347.6" width="8.6" height="8.4" fill="#393939"/><rect x="516.6" y="347.6" width="8.6" height="8.4" fill="#393939"/><rect x="526.6" y="347.6" width="8.6" height="8.4" fill="#393939"/><rect x="536.6" y="347.6" width="8.6" height="8.4" fill="#393939"/><rect x="546.6" y="347.6" width="8.6" height="8.4" fill="#393939"/><rect x="556.6" y="347.6" width="8.6" height="8.4" fill="#393939"/><rect x="566.6" y="347.6" width="8.6" height="8.4" fill="#393939"/><rect x="576.6" y="347.6" width="8.6" height="8.4" fill="#393939"/><rect x="586.6" y="347.6" width="8.6" height="8.4" fill="#393939"/><rect x="596.6" y="347.6" width="8.6" height="8.4" fill="#393939"/><rect x="606.6" y="347.6" width="8.6" height="8.4" fill="#393939"/></svg>
<div class="r" style="left:451.7px;top:190.1px;width:170.50000000000006px;height:130.70000000000002px;border:2px solid #37c24f;box-sizing:border-box;border-radius:2px"></div>
<div class="t" style="left:626.90px;top:165.86px;font-size:24.5px;color:#2ee640;font-weight:400;-webkit-text-stroke:0.4px #2ee640">3</div>
<div class="r" style="left:752.5px;top:85px;width:249.0px;height:413px;background:#fff;border-radius:3px"></div>
<div class="t" style="left:764.70px;top:98.45px;font-size:14px;color:#2a2a2a;font-weight:400;-webkit-text-stroke:0.3px #2a2a2a">Properties</div>
<svg class="r" style="left:968px;top:98px;" width="16" height="12" viewBox="968 98 16 12"><path d="M971.6 100.9L975 104.1L971.6 107.3M976 100.9L979.4 104.1L976 107.3" stroke="#222" stroke-width="1.4" fill="none"/></svg>
<div class="t" style="left:61.60px;top:510.04px;font-size:9.4px;color:#f5f5f5;font-weight:700;">Pro</div>
<div class="t" style="left:80.80px;top:510.68px;font-size:9px;color:#858585;font-weight:400;">is valid until 19 Jul 2026</div>
<div class="r" style="left:182px;top:505px;width:1px;height:18px;background:#3e3e3e"></div>
<div class="t" style="left:186.20px;top:510.68px;font-size:9px;color:#858585;font-weight:400;">50 purchased packages</div>
<svg class="r" style="left:287px;top:506px;" width="14" height="14" viewBox="287 506 14 14"><circle cx="293.7" cy="513.2" r="4.6" stroke="#8a8a8a" stroke-width="1" fill="none"/><path d="M293.7 512V516" stroke="#8a8a8a" stroke-width="1"/><circle cx="293.7" cy="510.4" r=".6" fill="#8a8a8a"/></svg>
<div class="r" style="left:304px;top:505px;width:1px;height:18px;background:#3e3e3e"></div>
<div class="t" style="left:309.30px;top:510.38px;font-size:9px;color:#8a8a8a;font-weight:400;letter-spacing:0.33px">************@*********</div>
<svg class="r" style="left:404px;top:505px;" width="18" height="17" viewBox="404 505 18 17"><path d="M411.58 509.47L412.20 509.28L412.16 508.07L413.84 508.07L413.80 509.28L414.42 509.47L414.56 509.53L415.13 509.84L415.97 508.95L417.15 510.13L416.26 510.97L416.57 511.54L416.63 511.68L416.82 512.30L418.03 512.26L418.03 513.94L416.82 513.90L416.63 514.52L416.57 514.66L416.26 515.23L417.15 516.07L415.97 517.25L415.13 516.36L414.56 516.67L414.42 516.73L413.80 516.92L413.84 518.13L412.16 518.13L412.20 516.92L411.58 516.73L411.44 516.67L410.87 516.36L410.03 517.25L408.85 516.07L409.74 515.23L409.43 514.66L409.37 514.52L409.18 513.90L407.97 513.94L407.97 512.26L409.18 512.30L409.37 511.68L409.43 511.54L409.74 510.97L408.85 510.13L410.03 508.95L410.87 509.84L411.44 509.53Z" stroke="#8a8a8a" stroke-width="1.0" fill="none" stroke-linejoin="round"/><circle cx="413" cy="513.1" r="1.6" stroke="#8a8a8a" stroke-width="1.0" fill="none"/></svg>
<svg class="r" style="left:790px;top:502px;" width="20" height="21" viewBox="790 502 20 21"><g fill="#bdbdbd"><ellipse cx="799.6" cy="507.85699999999997" rx="6.600000000000023" ry="1.9569999999999999"/><path d="M793 510.02Q799.6 512.49 806.2 510.02V512.49Q799.6 514.96 793 512.49Z"/><path d="M793 513.47Q799.6 515.94 806.2 513.47V515.94Q799.6 518.41 793 515.94Z"/><path d="M793 516.92Q799.6 519.39 806.2 516.92V519.39Q799.6 521.86 793 519.39Z"/></g></svg>
<div class="t" style="left:815.20px;top:509.07px;font-size:9.6px;color:#e6e6e6;font-weight:400;-webkit-text-stroke:0.15px #e6e6e6;letter-spacing:0.05px">Hand2Note</div>
<svg class="r" style="left:866px;top:510px;" width="14" height="8" viewBox="866 510 14 8"><path d="M870 513H875.8L872.9 515.8Z" fill="#777"/></svg>
<div class="t" style="left:917.10px;top:509.07px;font-size:9.6px;color:#eeeeee;font-weight:400;-webkit-text-stroke:0.15px #eeeeee;letter-spacing:0.03px">Hand2Note 4.1.240</div>
</body></html>
